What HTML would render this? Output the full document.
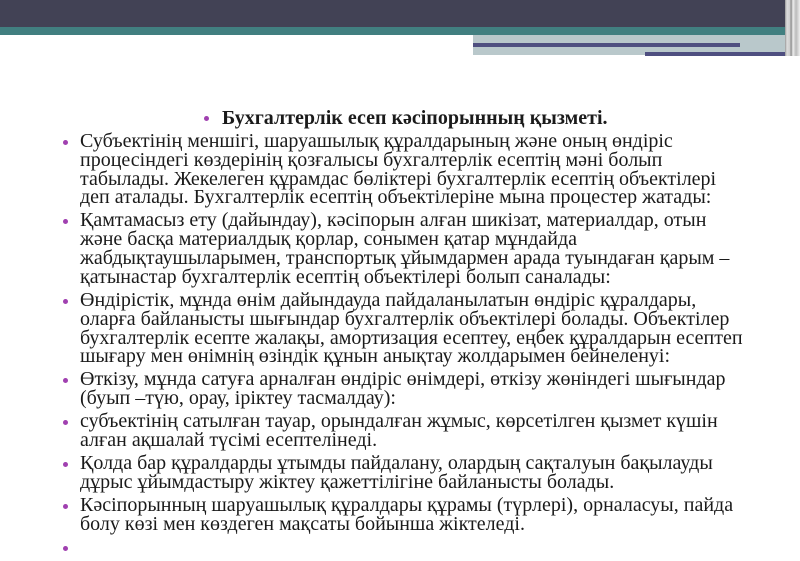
<!DOCTYPE html>
<html><head><meta charset="utf-8"><style>
body{margin:0;width:800px;height:551px;overflow:hidden;background:#fff;position:relative;font-family:"Liberation Serif",serif;color:#1a1a1a}
.dark{position:absolute;left:0;top:0;width:800px;height:27px;background:#424255}
.teal{position:absolute;left:0;top:27px;width:800px;height:8px;background:#417f80}
.rt{position:absolute;left:473px;top:35px;width:312px;height:20px;background:#b9c8cb}
.l1{position:absolute;left:473px;top:43px;width:267px;height:4px;background:#4f4f80}
.l2{position:absolute;left:645px;top:52px;width:140px;height:4px;background:#4f4f80}
.edge{position:absolute;left:785px;top:0;width:15px;height:56px;background:linear-gradient(90deg,#999 0,#ddd 2px,#ccc 5px,#888 6px,#eee 8px,#bbb 11px,#eee 15px)}
.t{position:absolute;left:222px;top:107px;font-size:20px;font-weight:bold;white-space:nowrap}
.b{position:absolute;left:62px;top:132px;font-size:20px;line-height:18.8px;white-space:nowrap}
.p{position:relative;padding-left:18px;margin-bottom:4.3px}
.p:before{content:"";position:absolute;left:1px;top:8px;width:5px;height:5px;border-radius:50%;background:#a040b0}
.tb{position:absolute;left:-18px;top:9px;width:5px;height:5px;border-radius:50%;background:#a040b0}
</style></head><body>
<div class="dark"></div><div class="teal"></div>
<div class="rt"></div><div class="l1"></div><div class="l2"></div><div class="edge"></div>
<div class="t"><span class="tb"></span>Бухгалтерлік есеп кәсіпорынның қызметі.</div>
<div class="b">
<div class="p">Субъектінің меншігі, шаруашылық құралдарының және оның өндіріс<br>процесіндегі көздерінің қозғалысы бухгалтерлік есептің мәні болып<br>табылады. Жекелеген құрамдас бөліктері бухгалтерлік есептің объектілері<br>деп аталады. Бухгалтерлік есептің объектілеріне мына процестер жатады:</div>
<div class="p">Қамтамасыз ету (дайындау), кәсіпорын алған шикізат, материалдар, отын<br>және басқа материалдық қорлар, сонымен қатар мұндайда<br>жабдықтаушыларымен, транспортық ұйымдармен арада туындаған қарым –<br>қатынастар бухгалтерлік есептің объектілері болып саналады:</div>
<div class="p">Өндірістік, мұнда өнім дайындауда пайдаланылатын өндіріс құралдары,<br>оларға байланысты шығындар бухгалтерлік объектілері болады. Объектілер<br>бухгалтерлік есепте жалақы, амортизация есептеу, еңбек құралдарын есептеп<br>шығару мен өнімнің өзіндік құнын анықтау жолдарымен бейнеленуі:</div>
<div class="p">Өткізу, мұнда сатуға арналған өндіріс өнімдері, өткізу жөніндегі шығындар<br>(буып –түю, орау, іріктеу тасмалдау):</div>
<div class="p">субъектінің сатылған тауар, орындалған жұмыс, көрсетілген қызмет күшін<br>алған ақшалай түсімі есептелінеді.</div>
<div class="p">Қолда бар құралдарды ұтымды пайдалану, олардың сақталуын бақылауды<br>дұрыс ұйымдастыру жіктеу қажеттілігіне байланысты болады.</div>
<div class="p">Кәсіпорынның шаруашылық құралдары құрамы (түрлері), орналасуы, пайда<br>болу көзі мен көздеген мақсаты бойынша жіктеледі.</div>
<div class="p">&nbsp;</div>
</div>
</body></html>
